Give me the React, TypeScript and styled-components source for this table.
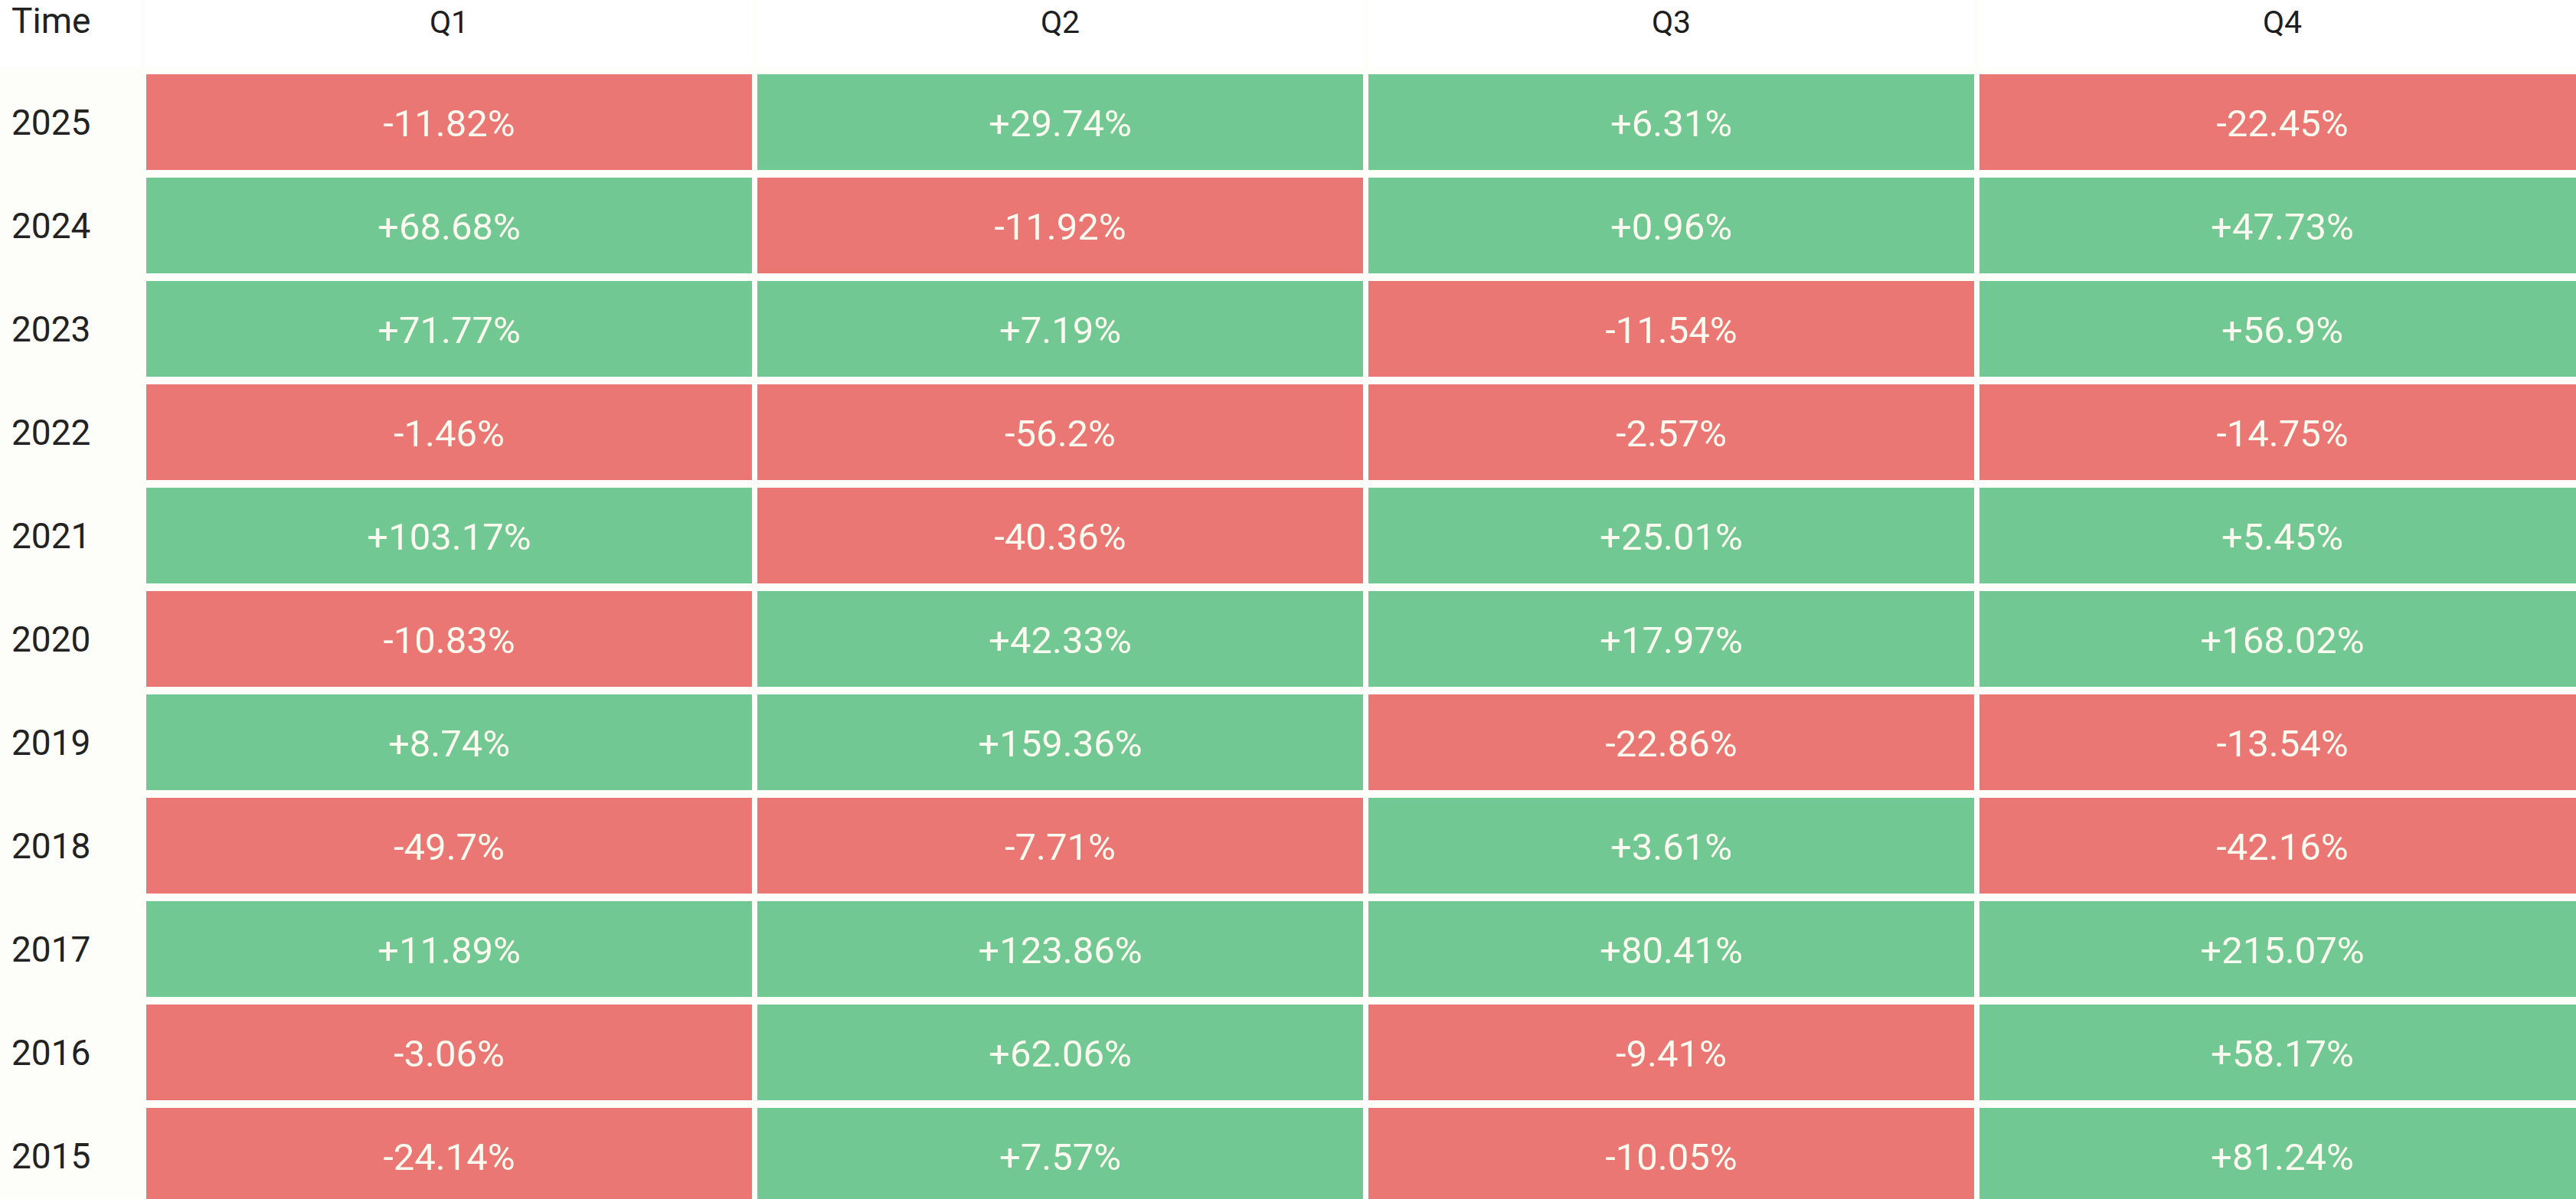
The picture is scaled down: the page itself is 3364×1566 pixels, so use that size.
import styled, { createGlobalStyle } from "styled-components"

const GlobalStyle = createGlobalStyle`
    html, body {
        margin: 0;
        padding: 0;
        background-color: #fdfefa;
        overflow: hidden;
    }
`

const quarters = ["Q1", "Q2", "Q3", "Q4"]

const returns: [number, number[]][] = [
    [2025, [-11.82, 29.74, 6.31, -22.45]],
    [2024, [68.68, -11.92, 0.96, 47.73]],
    [2023, [71.77, 7.19, -11.54, 56.9]],
    [2022, [-1.46, -56.2, -2.57, -14.75]],
    [2021, [103.17, -40.36, 25.01, 5.45]],
    [2020, [-10.83, 42.33, 17.97, 168.02]],
    [2019, [8.74, 159.36, -22.86, -13.54]],
    [2018, [-49.7, -7.71, 3.61, -42.16]],
    [2017, [11.89, 123.86, 80.41, 215.07]],
    [2016, [-3.06, 62.06, -9.41, 58.17]],
    [2015, [-24.14, 7.57, -10.05, 81.24]],
]

function format(value: number) {
    return (value >= 0 ? "+" : "") + value + "%"
}

export default function App() {
    return (
        <Page>
            <GlobalStyle />
            <Table>
                <HeaderLabel>Time</HeaderLabel>
                {quarters.map((q) => (
                    <QuarterLabel key={q}>{q}</QuarterLabel>
                ))}
                {returns.map(([year, values]) => (
                    <Row key={year}>
                        <YearLabel>{year}</YearLabel>
                        {values.map((v, i) => (
                            <Cell key={i} $up={v >= 0}>{format(v)}</Cell>
                        ))}
                    </Row>
                ))}
            </Table>
        </Page>
    )
}

const Page = styled.div`
    width: 3364px;
    height: 1566px;
    overflow: hidden;
    background-color: #fdfefa;
    font-family: Roboto, "Liberation Sans", sans-serif;
`

const Table = styled.div`
    display: grid;
    grid-template-columns: 184px repeat(4, 791px);
    grid-template-rows: 87px repeat(11, 125px);
    column-gap: 7px;
    row-gap: 10px;
`

const Row = styled.div`
    display: contents;
`

const HeaderLabel = styled.div`
    padding-left: 15px;
    font-size: 46px;
    line-height: 54px;
    color: #222;
    background-color: #ffffff;
`

const QuarterLabel = styled.div`
    text-align: center;
    font-size: 41px;
    line-height: 58px;
    color: #1e1e1e;
    background-color: #ffffff;
`

const YearLabel = styled.div`
    display: flex;
    align-items: center;
    padding-left: 15px;
    font-size: 46px;
    color: #222;
`

const Cell = styled.div<{ $up: boolean }>`
    display: flex;
    align-items: center;
    justify-content: center;
    background-color: ${(p) => (p.$up ? "#72c893" : "#ea7774")};
    color: #fdfbf0;
    font-size: 49px;
    padding-top: 4px;
    box-sizing: border-box;
`
